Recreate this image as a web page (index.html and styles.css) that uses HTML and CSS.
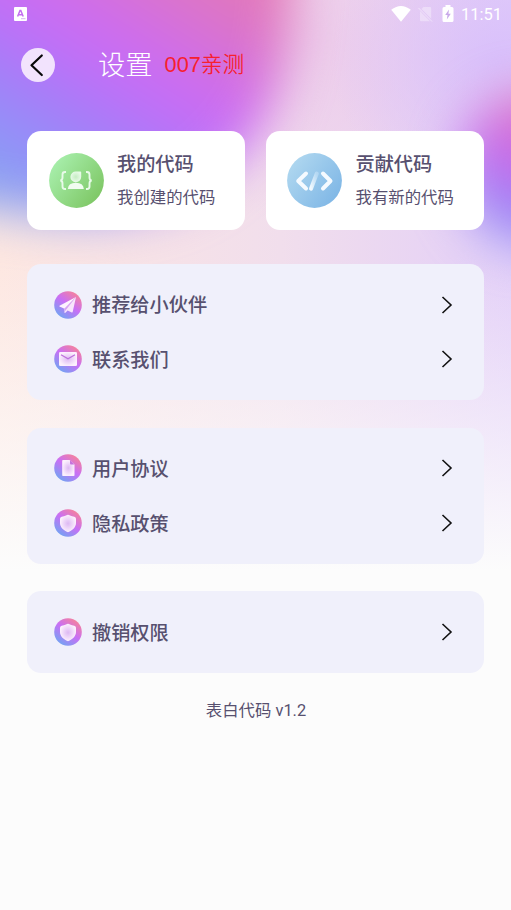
FILE: index.html
```html
<!DOCTYPE html>
<html lang="zh-CN">
<head>
<meta charset="utf-8">
<title>设置</title>
<link rel="stylesheet" href="styles.css">
</head>
<body>
<svg class="backdrop" viewBox="0 0 511 910" aria-hidden="true">
  <defs>
    <linearGradient id="big" gradientUnits="userSpaceOnUse" x1="240" y1="-60" x2="60" y2="230">
      <stop offset="0" stop-color="#e57ab2"/><stop offset=".18" stop-color="#de76c2"/><stop offset=".43" stop-color="#cd6cf0"/><stop offset=".54" stop-color="#c16ff8"/><stop offset=".67" stop-color="#a97bf8"/><stop offset=".84" stop-color="#9390f9"/><stop offset="1" stop-color="#88a3ef"/>
    </linearGradient>
    <linearGradient id="small" gradientUnits="userSpaceOnUse" x1="535" y1="100" x2="485" y2="230">
      <stop offset="0" stop-color="#e070b8"/><stop offset=".4" stop-color="#cb6bea"/><stop offset=".7" stop-color="#a97df5"/><stop offset="1" stop-color="#8f98f5"/>
    </linearGradient>
    <linearGradient id="base" x1="0" y1="0" x2="1" y2="0">
      <stop offset="0" stop-color="#fde7e1"/><stop offset=".55" stop-color="#f1deec"/><stop offset="1" stop-color="#e3cff8"/>
    </linearGradient>
    <linearGradient id="fade" x1="0" y1="0" x2="0" y2="1">
      <stop offset="0" stop-color="#fcfcfc" stop-opacity="0"/><stop offset=".6" stop-color="#fcfcfc" stop-opacity=".6"/><stop offset="1" stop-color="#fcfcfc"/>
    </linearGradient>
    <radialGradient id="lilac"><stop offset="0" stop-color="#d9c0fb"/><stop offset="1" stop-color="#d9c0fb" stop-opacity="0"/></radialGradient>
    <radialGradient id="rose"><stop offset="0" stop-color="#edcceb"/><stop offset="1" stop-color="#edcceb" stop-opacity="0"/></radialGradient>
    <filter id="blur" filterUnits="userSpaceOnUse" x="-400" y="-400" width="1300" height="900" color-interpolation-filters="sRGB"><feGaussianBlur stdDeviation="24"/></filter>
  </defs>
  <rect width="511" height="910" fill="#fcfcfc"/>
  <rect width="511" height="570" fill="url(#base)"/>
  <ellipse cx="320" cy="40" rx="180" ry="190" fill="url(#rose)"/>
  <ellipse cx="500" cy="60" rx="170" ry="150" fill="url(#lilac)"/>
  <rect y="260" width="511" height="312" fill="url(#fade)"/>
  <path d="M-200-200H286C298-80 297 20 282 75C268 125 243 160 195 190C140 219 65 224-10 207L-200 185z" fill="url(#big)" filter="url(#blur)"/>
  <circle cx="534" cy="169" r="76" fill="url(#small)" filter="url(#blur)"/>
</svg>
<svg class="sprites" aria-hidden="true">
  <defs>
    <linearGradient id="g" x1=".85" y1=".1" x2=".2" y2="1"><stop offset="0" stop-color="#f5829c"/><stop offset=".45" stop-color="#c96ff5"/><stop offset="1" stop-color="#6ba8f2"/></linearGradient>
    <radialGradient id="w"><stop offset="0" stop-color="#ddb8f3"/><stop offset="1" stop-color="#fcf0fd"/></radialGradient>
    <symbol id="next" viewBox="0 0 12 20"><path d="M1.500 2 10 10 1.500 18" fill="none" stroke="#111" stroke-width="1.600"/></symbol>
    <symbol id="shield" viewBox="0 0 28 28"><circle cx="14" cy="14" r="13.800" fill="url(#g)"/><path d="M14 5.800q1 0 2 .6 2 1 4.300 1.300 1.700.3 1.700 2v4.300c0 4-3.300 7.300-8 9.200-4.700-1.900-8-5.200-8-9.200V9.700q0-1.700 1.700-2Q10 7.400 12 6.400q1-.6 2-.6z" fill="url(#w)"/></symbol>
  </defs>
</svg>
<div class="screen">
  <div class="status">
    <svg class="app-mark" viewBox="0 0 13 14"><rect width="13" height="14" rx="1" fill="#fff"/><path d="M3.600 9.500 6 3.500h.8l2.400 6M4.500 7.700h3.800" fill="none" stroke="#c36ef0" stroke-width="1.500"/><path d="M7 11.700h4.500" stroke="#c9a3e8" stroke-width=".8"/></svg>
    <div class="system">
      <svg width="20" height="16" viewBox="0 0 20 16"><path d="M.2 3.800Q10-3.800 19.800 3.800L10 15.800z" fill="#fff"/></svg>
      <svg class="sim" width="15" height="17" viewBox="0 0 15 17"><path d="M5.500 1H12q1.200 0 1.200 1.200v10.500L3.500 3zM2 5l10 10.300H3q-1 0-1-1z" fill="#fff" opacity=".35"/><path d="M.5 2 14 15.500" stroke="#fff" opacity=".5"/></svg>
      <svg class="battery" width="12" height="18" viewBox="0 0 12 18"><path d="M3.500 0h5v2H10q1.500 0 1.500 1.500v12Q11.500 17 10 17H2Q.5 17 .5 15.500v-12Q.5 2 2 2h1.500z" fill="#fff"/><path d="M7 4.500 3.200 10H5.500L4.800 14.500 8.800 8.800H6.400z" fill="#c9a9ea"/></svg>
      <span>11:51</span>
    </div>
  </div>
  <header class="header">
    <svg class="back" viewBox="0 0 34 34"><circle cx="17" cy="17" r="17" fill="#f2e3fd"/><path d="M20.800 7.500 10.500 17.300 20.800 27" fill="none" stroke="#080808" stroke-width="2.200" stroke-linecap="round" stroke-linejoin="round"/></svg>
    <h1>设置</h1>
    <span class="mark">007亲测</span>
  </header>
  <main>
    <section class="cards">
      <article class="card">
        <svg class="disc" viewBox="0 0 55 55">
          <defs><linearGradient id="green" x1="0" y1=".15" x2="1" y2=".9"><stop offset="0" stop-color="#aaf1b0"/><stop offset="1" stop-color="#7ac35e"/></linearGradient><radialGradient id="leaf"><stop offset="0" stop-color="#c5edc2"/><stop offset="1" stop-color="#e8fae8"/></radialGradient></defs>
          <circle cx="27.500" cy="27.500" r="27.400" fill="url(#green)"/>
          <path d="M17 19h-1q-2.500 0-2.500 2.500v3q0 2.800-2.200 3 2.200.2 2.200 3v3Q13.500 36 16 36h1M37 19h1q2.500 0 2.500 2.500v3q0 2.800 2.200 3-2.200.2-2.200 3v3Q40.500 36 38 36h-1" fill="none" stroke="#e9fae9" stroke-width="1.900"/>
          <path d="M27 18.500h4.500q.7 0 .7.700V24a5.400 5.400 0 1 1-5.200-5.500z" fill="url(#leaf)"/><path d="M18.800 36q.5-6.200 8-6.200T34.800 36z" fill="#f1fcf0"/>
        </svg>
        <div><h2>我的代码</h2><p>我创建的代码</p></div>
      </article>
      <article class="card">
        <svg class="disc" viewBox="0 0 55 55">
          <defs><linearGradient id="sky" x1="0" y1=".15" x2="1" y2=".9"><stop offset="0" stop-color="#b2d9f0"/><stop offset="1" stop-color="#7bb4e5"/></linearGradient><linearGradient id="slash" x1="1" y1="0" x2="0" y2="1"><stop offset="0" stop-color="#b4d8f3"/><stop offset="1" stop-color="#f2f9fe"/></linearGradient></defs>
          <circle cx="27.500" cy="27.500" r="27.400" fill="url(#sky)"/>
          <path d="M19 20.500 11.200 28l7.800 7.500M36 20.500 43.500 28 36 35.500" fill="none" stroke="#f5faff" stroke-width="4" stroke-linecap="round" stroke-linejoin="round"/><path d="M29.800 20.500 24 35.700" stroke="url(#slash)" stroke-width="4" stroke-linecap="round"/>
        </svg>
        <div><h2>贡献代码</h2><p>我有新的代码</p></div>
      </article>
    </section>
    <section class="group">
      <div class="row"><svg class="icon" viewBox="0 0 28 28"><circle cx="14" cy="14" r="13.800" fill="url(#g)"/><path d="M22 6 5.500 14.800q-.6.400.1.800l4.900 2.100z" fill="#fdf3fe"/><path d="M22 6 10.500 17.700v4q0 .7.600.2l2.500-2.500 4.200 2q.7.300.9-.4z" fill="#f8e5fc"/><path d="M22 6 10.500 17.700l.6 2.200z" fill="#d7a3f2"/></svg><span>推荐给小伙伴</span><svg class="next"><use href="#next"/></svg></div>
      <div class="row"><svg class="icon" viewBox="0 0 28 28"><circle cx="14" cy="14" r="13.800" fill="url(#g)"/><rect x="5" y="7" width="18" height="14" rx="1.300" fill="url(#w)"/><path d="m7 9.800 7 4 7-4" fill="none" stroke="#be70dc" stroke-width="1.300"/></svg><span>联系我们</span><svg class="next"><use href="#next"/></svg></div>
    </section>
    <section class="group">
      <div class="row"><svg class="icon" viewBox="0 0 28 28"><circle cx="14" cy="14" r="13.800" fill="url(#g)"/><path d="M9 6h6.500l5 4.500v10.700q0 .8-.8.800H9q-.8 0-.8-.8V6.800Q8.200 6 9 6z" fill="url(#w)"/><path d="M16 6.200v3.300q0 1 1 1h3.400z" fill="#c473dd"/></svg><span>用户协议</span><svg class="next"><use href="#next"/></svg></div>
      <div class="row"><svg class="icon"><use href="#shield"/></svg><span>隐私政策</span><svg class="next"><use href="#next"/></svg></div>
    </section>
    <section class="group">
      <div class="row"><svg class="icon"><use href="#shield"/></svg><span>撤销权限</span><svg class="next"><use href="#next"/></svg></div>
    </section>
  </main>
  <footer>表白代码 v1.2</footer>
</div>
</body>
</html>
```
FILE: styles.css
```css
* { box-sizing: border-box; }
body {
  margin: 0;
  color: #57506f;
  background: #fcfcfc;
  font-family: Roboto, "Noto Sans CJK SC", sans-serif;
}
h1, h2, p { margin: 0; }
svg { display: block; flex: none; }
.backdrop { position: absolute; top: 0; left: 0; width: 511px; height: 910px; }
.sprites { position: absolute; width: 0; height: 0; }
.screen { position: relative; height: 910px; overflow: hidden; }
.status {
  display: flex;
  justify-content: space-between;
  height: 28px;
  padding: 7px 9px 0 14px;
}
.app-mark { width: 13px; height: 14px; }
.system {
  display: flex;
  align-items: center;
  height: 14px;
  color: #fff;
  font-size: 16.500px;
  font-weight: 400;
  line-height: 14px;
}
.system span { padding-top: 2px; }
.sim { margin-left: 7px; }
.battery { margin: -1px 7px 0 9px; }
.header {
  display: flex;
  align-items: center;
  height: 74px;
  padding-left: 21px;
}
.back { width: 34px; height: 34px; }
h1 {
  margin-left: 43px;
  padding-top: 2px;
  color: #fff;
  font-size: 27.300px;
  font-weight: 300;
  line-height: 40px;
}
.mark {
  margin-left: 12px;
  color: #f7202e;
  font-family: "Liberation Sans", "Noto Sans CJK SC", sans-serif;
  font-size: 21.700px;
  font-weight: 350;
  line-height: 30px;
}
main {
  display: flex;
  flex-direction: column;
  gap: 27.500px;
  padding: 29px 27px 0;
}
.cards {
  display: grid;
  grid-template-columns: 1fr 1fr;
  gap: 21px;
  margin-bottom: 6.500px;
}
.card {
  display: flex;
  gap: 13.500px;
  height: 99px;
  padding: 22px 0 0 21.500px;
  border-radius: 14px;
  background: #fff;
}
.card + .card { padding-left: 21px; }
.disc { width: 55px; height: 55px; }
h2 {
  font-size: 19.200px;
  font-weight: 500;
  line-height: 26px;
  margin-top: -1px;
}
.card p { margin-top: 8px; font-size: 16.400px; line-height: 24px; }
.group {
  padding: 13.500px 31.500px 13.500px 27px;
  border-radius: 14px;
  background: #f0f0fb;
}
.row {
  display: flex;
  align-items: center;
  height: 54.600px;
  font-size: 19.200px;
  font-weight: 500;
}
.row span { margin-top: -1px; }
.icon { width: 28px; height: 28px; margin-right: 10px; }
.next { width: 12px; height: 20px; margin-left: auto; }
footer { margin-top: 26px; padding-left: 1px; text-align: center; font-size: 16.400px; line-height: 24px; }
```
